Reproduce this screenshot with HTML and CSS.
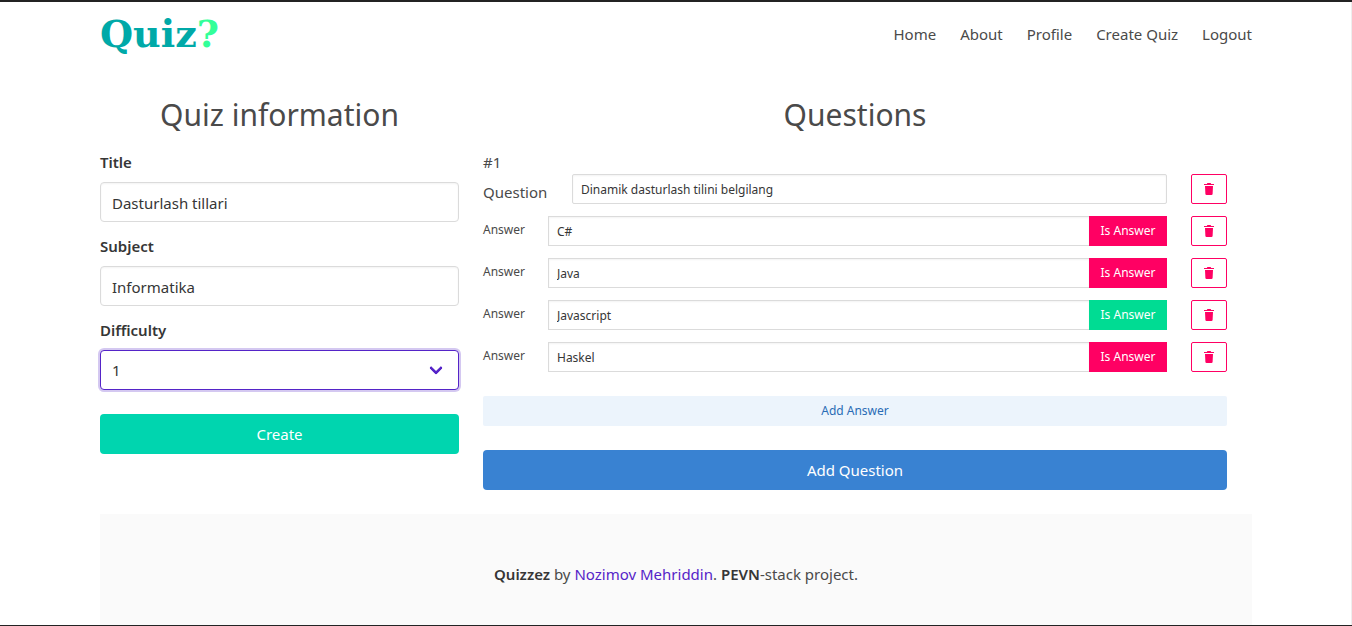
FILE: index.html
```html
<!DOCTYPE html>
<html lang="en">
<head>
<meta charset="utf-8">
<meta name="viewport" content="width=device-width, initial-scale=1">
<title>Quiz - Create Quiz</title>
<link rel="stylesheet" href="styles.css">
</head>
<body>
<svg class="sprite" aria-hidden="true">
  <symbol id="trash" viewBox="0 0 12 14">
    <path fill="currentColor" d="M1 2h2.8l.6-1h3.2l.6 1H11v1H1zM2 4h8l-.4 7.9A1.2 1.2 0 0 1 8.4 13H3.6a1.2 1.2 0 0 1-1.2-1.1z"/>
  </symbol>
</svg>
<header class="container navbar">
  <a class="brand" href="#">Quiz<span class="brand-mark">?</span></a>
  <nav class="menu">
    <a href="#">Home</a>
    <a href="#">About</a>
    <a href="#">Profile</a>
    <a href="#">Create Quiz</a>
    <a href="#">Logout</a>
  </nav>
</header>
<main class="container columns">
  <form class="info">
    <h1 class="heading">Quiz information</h1>
    <div class="field">
      <label class="label" for="title">Title</label>
      <input class="input" id="title" type="text" value="Dasturlash tillari">
    </div>
    <div class="field">
      <label class="label" for="subject">Subject</label>
      <input class="input" id="subject" type="text" value="Informatika">
    </div>
    <div class="field">
      <label class="label" for="difficulty">Difficulty</label>
      <div class="select">
        <select class="input" id="difficulty"><option>1</option><option>2</option><option>3</option></select>
      </div>
    </div>
    <button class="button create" type="button">Create</button>
  </form>
  <section class="questions">
    <h1 class="heading">Questions</h1>
    <p class="number">#1</p>
    <div class="row">
      <label class="question-label" for="question">Question</label>
      <input class="input small question-input" id="question" type="text" value="Dinamik dasturlash tilini belgilang">
      <button class="delete" type="button" aria-label="Delete question"><svg><use href="#trash"/></svg></button>
    </div>
    <div class="row">
      <label class="answer-label" for="a1">Answer</label>
      <div class="addons"><input class="input small" id="a1" type="text" value="C#"><button class="mark" type="button">Is Answer</button></div>
      <button class="delete" type="button" aria-label="Delete answer"><svg><use href="#trash"/></svg></button>
    </div>
    <div class="row">
      <label class="answer-label" for="a2">Answer</label>
      <div class="addons"><input class="input small" id="a2" type="text" value="Java"><button class="mark" type="button">Is Answer</button></div>
      <button class="delete" type="button" aria-label="Delete answer"><svg><use href="#trash"/></svg></button>
    </div>
    <div class="row">
      <label class="answer-label" for="a3">Answer</label>
      <div class="addons"><input class="input small" id="a3" type="text" value="Javascript"><button class="mark correct" type="button">Is Answer</button></div>
      <button class="delete" type="button" aria-label="Delete answer"><svg><use href="#trash"/></svg></button>
    </div>
    <div class="row">
      <label class="answer-label" for="a4">Answer</label>
      <div class="addons"><input class="input small" id="a4" type="text" value="Haskel"><button class="mark" type="button">Is Answer</button></div>
      <button class="delete" type="button" aria-label="Delete answer"><svg><use href="#trash"/></svg></button>
    </div>
    <button class="button add-answer" type="button">Add Answer</button>
    <button class="button add-question" type="button">Add Question</button>
  </section>
</main>
<footer class="container footer">
  <p><strong>Quizzez</strong> by <a href="#">Nozimov Mehriddin</a>. <strong>PEVN</strong>-stack project.</p>
</footer>
</body>
</html>
```
FILE: styles.css
```css
*, *::before, *::after { box-sizing: border-box; }

body {
  margin: 0;
  min-height: 100vh;
  display: flex;
  flex-direction: column;
  border: solid #232323;
  border-width: 2px 0 1px;
  box-shadow: inset -1px 0 #eeeeee;
  background: #ffffff;
  color: #4a4a4a;
  font: 15px/24px "Noto Sans", sans-serif;
}

button, input, select { font: inherit; margin: 0; }
button { cursor: pointer; border: 0; padding: 0; }
h1, p { margin: 0; }
a { color: inherit; text-decoration: none; }
strong { color: #363636; font-weight: 600; }

.sprite { position: absolute; width: 0; height: 0; }

.container { width: calc(100% - 64px); max-width: 1152px; margin: 0 auto; }

.navbar {
  display: flex;
  align-items: center;
  justify-content: space-between;
  height: 64px;
}
.brand { color: #00a9a8; font: bold 38px/40px "DejaVu Serif", serif; }
.brand-mark { color: #33ff99; }
.menu { display: flex; gap: 24px; }

.columns {
  display: grid;
  grid-template-columns: minmax(0, 359fr) minmax(0, 744fr);
  gap: 24px;
  padding: 31px 25px 24px 0;
}
.heading {
  margin-bottom: 17px;
  font-size: 30px;
  line-height: 36px;
  font-weight: 400;
  text-align: center;
}

.field { margin-bottom: 12px; }
.label {
  display: block;
  margin-bottom: 8px;
  color: #363636;
  font-weight: 600;
}
.input {
  display: block;
  width: 100%;
  min-width: 0;
  height: 40px;
  padding: 2px 11px 0;
  border: 1px solid #dbdbdb;
  border-radius: 4px;
  outline: 0;
  background: #ffffff;
  color: #363636;
  box-shadow: inset 0 1px 2px rgba(10, 10, 10, 0.05);
}
.select { position: relative; }
.select .input {
  appearance: none;
  padding: 0 40px 0 11px;
  border-color: #5524c8;
  box-shadow: 0 0 0 2px rgba(85, 36, 200, 0.25);
}
.select::after {
  content: "";
  position: absolute;
  top: 13px;
  right: 18px;
  width: 10px;
  height: 10px;
  border: solid #5524c8;
  border-width: 0 3px 3px 0;
  border-radius: 2px;
  transform: rotate(45deg);
}

.button { display: block; width: 100%; height: 40px; border-radius: 4px; }
.create { margin-top: 24px; background: #00d5af; color: #ffffff; }

.row { display: flex; gap: 24px; margin-bottom: 12px; }
.question-label { width: 65px; padding-top: 6px; white-space: nowrap; }
.answer-label { width: 41px; padding-top: 2px; font-size: 12px; white-space: nowrap; }
.small { height: 30px; padding: 0 8px; border-radius: 2px; font-size: 12px; }
.question-input { flex: 1; }
.addons { display: flex; flex: 1; min-width: 0; }
.addons .small { border-right: 0; border-radius: 0; }
.mark {
  flex: none;
  width: 78px;
  height: 30px;
  background: #ff0063;
  color: #ffffff;
  font-size: 12px;
}
.mark.correct { background: #00dc93; }
.delete {
  display: flex;
  flex: none;
  align-items: center;
  justify-content: center;
  width: 36px;
  height: 30px;
  border: 1px solid #ff0063;
  border-radius: 2px;
  background: #ffffff;
  color: #ff0063;
}
.delete svg { width: 12px; height: 14px; }

.add-answer {
  height: 30px;
  margin: 24px 0;
  border-radius: 2px;
  background: #ecf4fc;
  color: #2a6cb5;
  font-size: 12px;
}
.add-question { background: #3982d2; color: #ffffff; }

.footer {
  flex: 1;
  padding: 48px 24px 36px;
  background: #fafafa;
  text-align: center;
}
.footer a { color: #5524c8; }
```
